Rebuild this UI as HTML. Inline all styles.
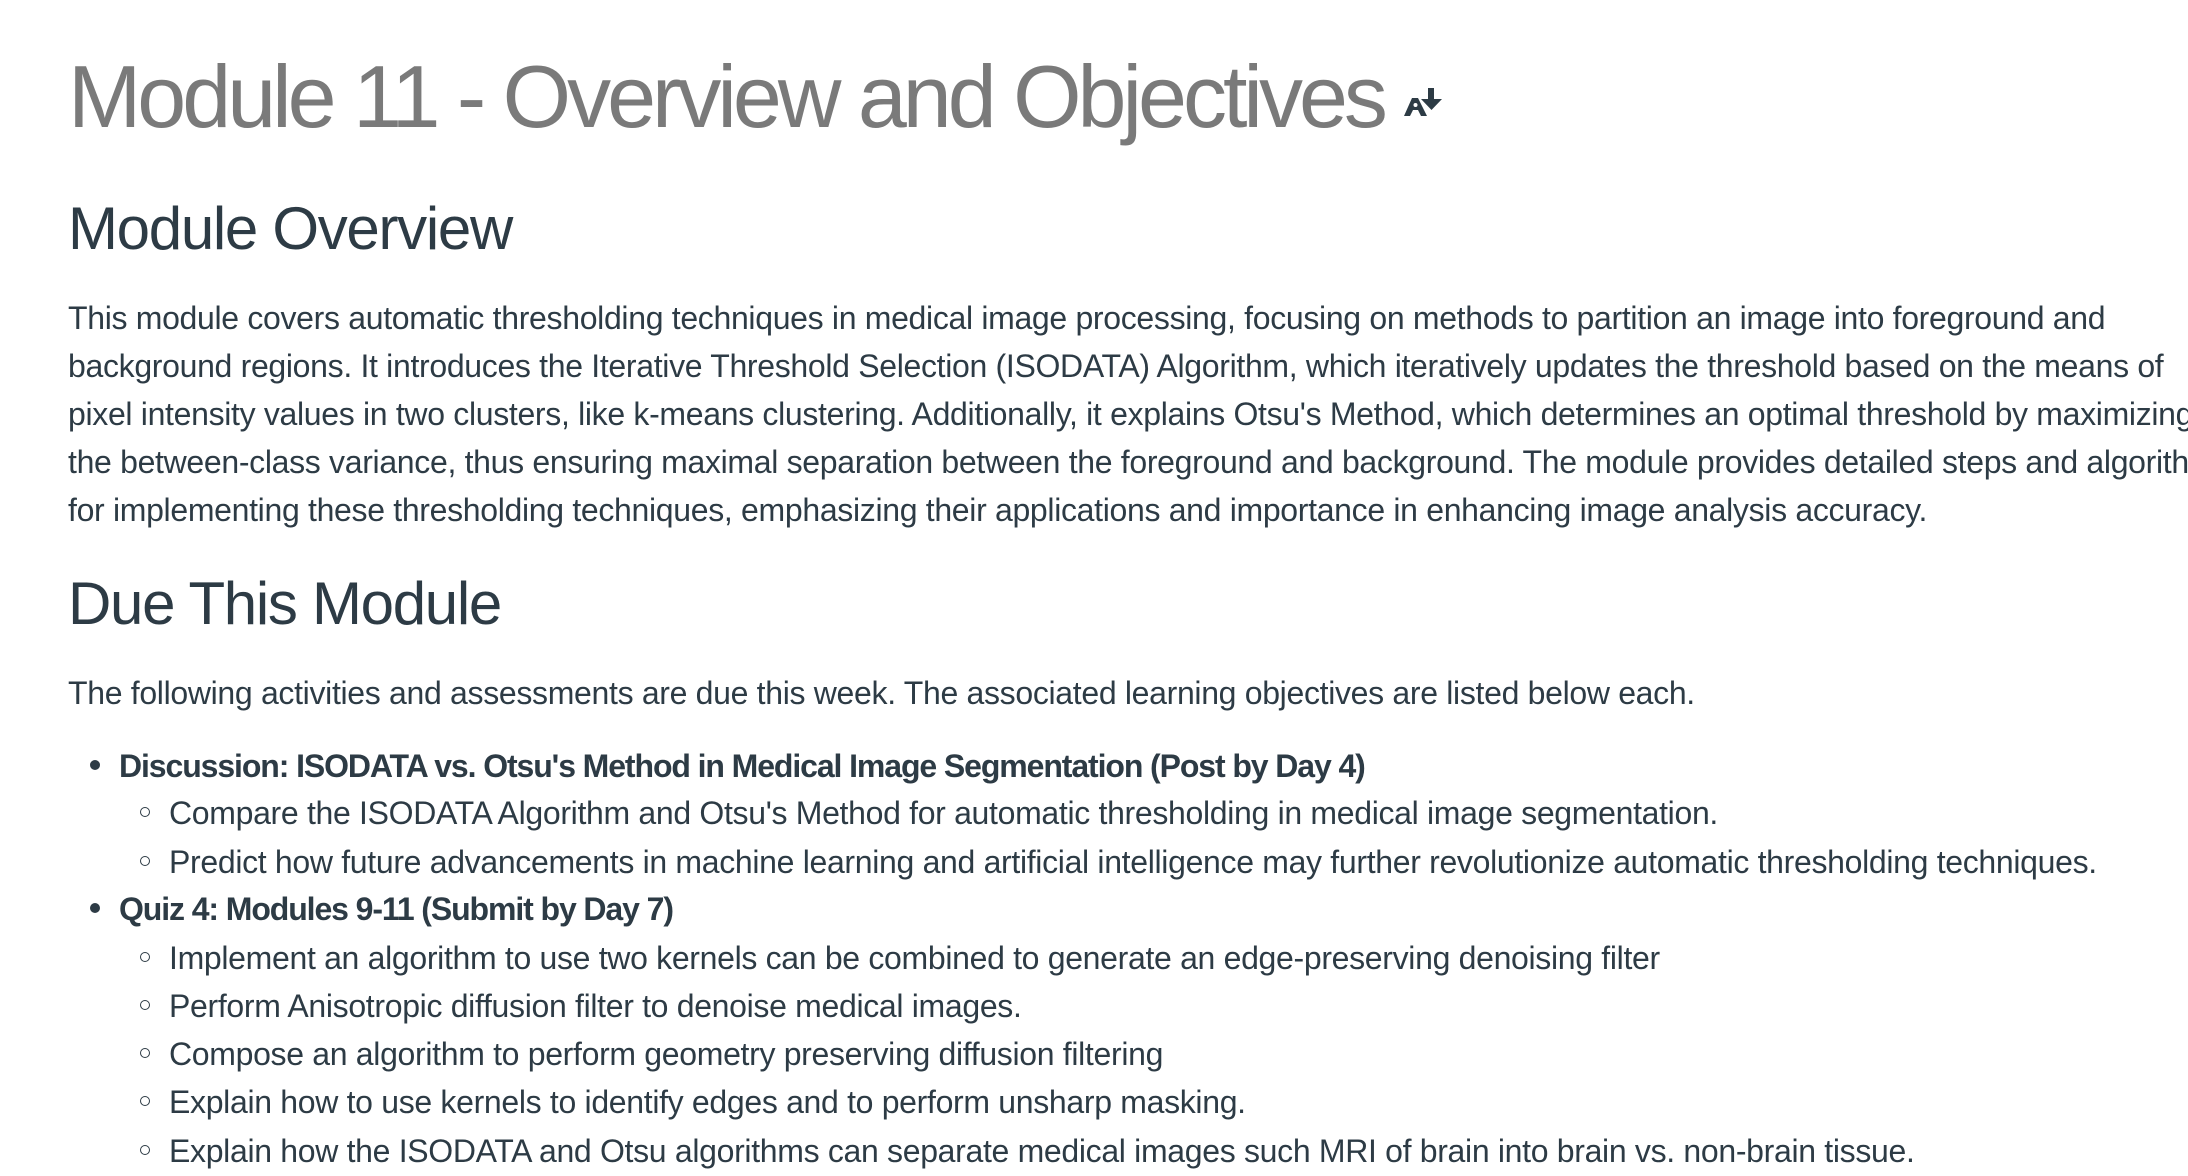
<!DOCTYPE html>
<html><head><meta charset="utf-8"><style>
html,body{margin:0;padding:0;width:2188px;height:1176px;overflow:hidden;background:#fff;}
body{position:relative;font-family:"Liberation Sans",sans-serif;color:#2d3b45;}
.l{position:absolute;white-space:nowrap;font-size:32px;line-height:48px;height:48px;letter-spacing:-0.32px;margin-top:-3px;}
.b{font-weight:bold;letter-spacing:-1.1px;}
.h{position:absolute;white-space:nowrap;font-size:60px;line-height:70px;letter-spacing:-1.3px;color:#2d3b45;left:68px;margin-top:-2px;}
.d{position:absolute;width:10px;height:10px;border-radius:50%;background:#2d3b45;left:90px;margin-top:-3px;}
.c{position:absolute;width:8px;height:8px;border-radius:50%;border:1.6px solid #2d3b45;left:140px;margin-top:-3px;}
</style></head><body>
<div style="position:absolute;left:68px;top:47px;font-size:88px;line-height:100px;color:#7a7a7a;letter-spacing:-4px;white-space:nowrap;">Module 11 - Overview and Objectives</div>
<svg style="position:absolute;left:1400px;top:86px" width="45" height="34" viewBox="1400 86 45 34">
<path d="M1404 116 L1412 98 L1418 98 L1427 116 L1421 116 L1418 110 L1413 110 L1410 116 Z" fill="#2d3b45"/>
<circle cx="1415.5" cy="105" r="2" fill="#fff"/>
<path d="M1428 88 L1434 88 L1434 99 L1442 99 L1431.5 110 L1421 99 L1428 99 Z" fill="#2d3b45"/>
</svg>
<div class="h" style="top:196px">Module Overview</div>
<div class="l" style="left:68px;top:297px">This module covers automatic thresholding techniques in medical image processing, focusing on methods to partition an image into foreground and</div>
<div class="l" style="left:68px;top:345px">background regions. It introduces the Iterative Threshold Selection (ISODATA) Algorithm, which iteratively updates the threshold based on the means of</div>
<div class="l" style="left:68px;top:393px">pixel intensity values in two clusters, like k-means clustering. Additionally, it explains Otsu's Method, which determines an optimal threshold by maximizing</div>
<div class="l" style="left:68px;top:441px">the between-class variance, thus ensuring maximal separation between the foreground and background. The module provides detailed steps and algorithms</div>
<div class="l" style="left:68px;top:489px">for implementing these thresholding techniques, emphasizing their applications and importance in enhancing image analysis accuracy.</div>
<div class="h" style="top:571px">Due This Module</div>
<div class="l" style="left:68px;top:672px">The following activities and assessments are due this week. The associated learning objectives are listed below each.</div>
<div class="d" style="top:763px"></div>
<div class="l b" style="left:119px;top:745px">Discussion: ISODATA vs. Otsu's Method in Medical Image Segmentation (Post by Day 4)</div>
<div class="c" style="top:810px"></div>
<div class="l" style="left:169px;top:792px">Compare the ISODATA Algorithm and Otsu's Method for automatic thresholding in medical image segmentation.</div>
<div class="c" style="top:859px"></div>
<div class="l" style="left:169px;top:841px">Predict how future advancements in machine learning and artificial intelligence may further revolutionize automatic thresholding techniques.</div>
<div class="d" style="top:906px"></div>
<div class="l b" style="left:119px;top:888px">Quiz 4: Modules 9-11 (Submit by Day 7)</div>
<div class="c" style="top:955px"></div>
<div class="l" style="left:169px;top:937px">Implement an algorithm to use two kernels can be combined to generate an edge-preserving denoising filter</div>
<div class="c" style="top:1003px"></div>
<div class="l" style="left:169px;top:985px">Perform Anisotropic diffusion filter to denoise medical images.</div>
<div class="c" style="top:1051px"></div>
<div class="l" style="left:169px;top:1033px">Compose an algorithm to perform geometry preserving diffusion filtering</div>
<div class="c" style="top:1099px"></div>
<div class="l" style="left:169px;top:1081px">Explain how to use kernels to identify edges and to perform unsharp masking.</div>
<div class="c" style="top:1148px"></div>
<div class="l" style="left:169px;top:1130px">Explain how the ISODATA and Otsu algorithms can separate medical images such MRI of brain into brain vs. non-brain tissue.</div>
</body></html>
